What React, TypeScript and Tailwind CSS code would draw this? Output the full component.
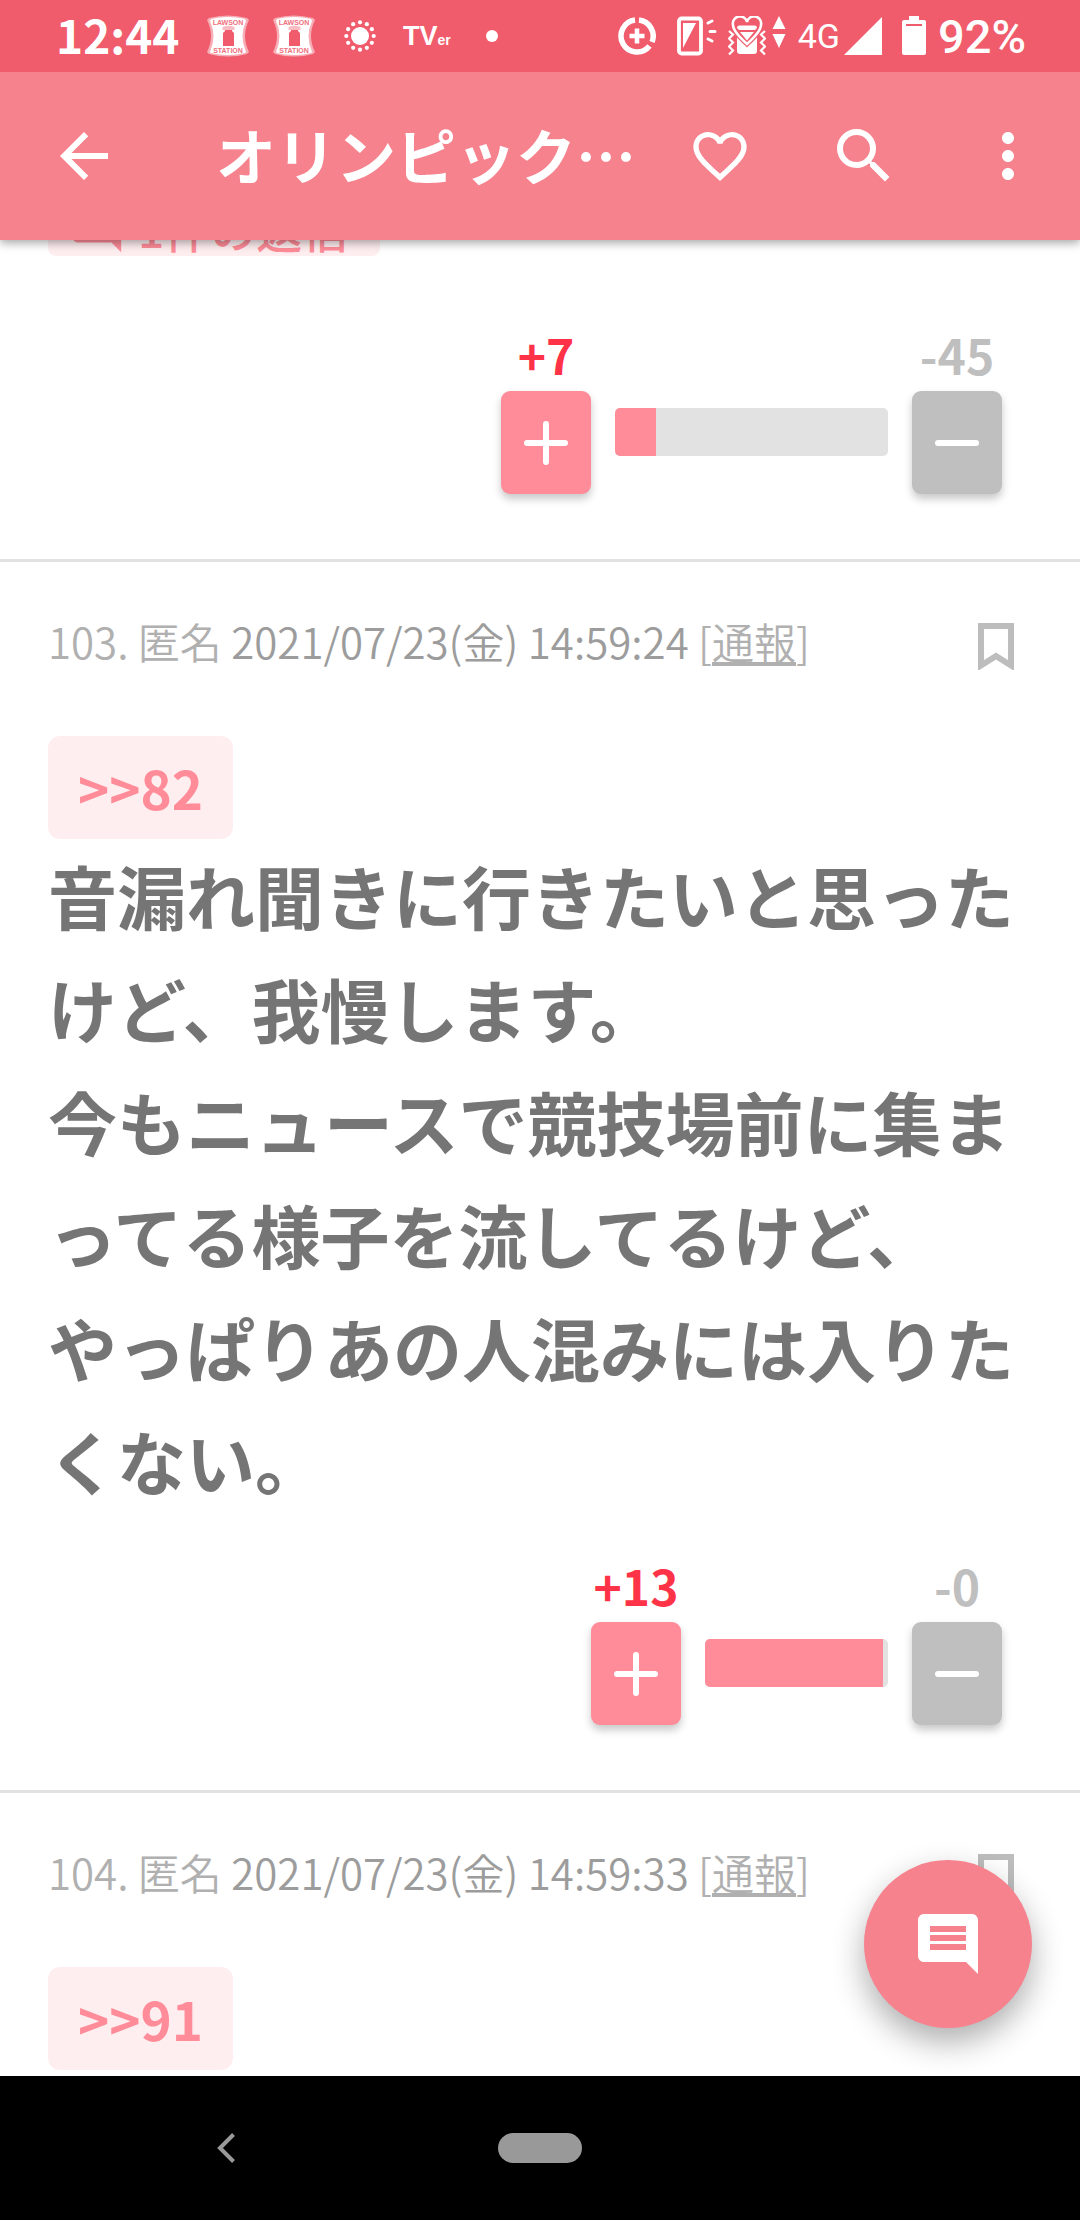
import React from "react";
import { MdArrowBack, MdComment, MdFavoriteBorder, MdMoreVert, MdSearch } from "react-icons/md";

function LawsonIcon() {
  return (
    <svg viewBox="0 0 42 42" className="h-[42px] w-[42px]" aria-hidden="true">
      <path d="M2 3Q21 -2 40 3L42 5Q34 21 42 37L40 39Q21 44 2 39L0 37Q8 21 0 5Z" fill="#fff" opacity="0.5" />
      <path d="M4 4Q21 0 38 4L39 6Q32 21 39 37L38 38Q21 42 4 38L3 37Q10 21 3 6Z" fill="#fff" />
      <path d="M18 13h7v3l2 2v13H16V18l2-2z" fill="#f05c6c" />
      <path d="M15.500 12Q21.500 9.500 27.500 12v3h-12z" fill="#f9bcc3" />
      <text x="21" y="10" textAnchor="middle" fontSize="7" fontWeight="700" fill="#f0707e" fontFamily="Liberation Sans, sans-serif">LAWSON</text>
      <text x="21" y="38" textAnchor="middle" fontSize="7" fontWeight="700" fill="#f0707e" fontFamily="Liberation Sans, sans-serif">STATION</text>
    </svg>
  );
}

function SunIcon() {
  const dots = Array.from({ length: 12 }, (_, i) => (i * Math.PI) / 6);
  return (
    <svg viewBox="0 0 36 36" className="h-9 w-9" aria-hidden="true" fill="#fff">
      <circle cx="18" cy="18" r="9" />
      {dots.map((a) => (
        <circle key={a} cx={18 + 13.7 * Math.cos(a)} cy={18 + 13.7 * Math.sin(a)} r="2.1" />
      ))}
    </svg>
  );
}

function TverIcon() {
  return (
    <svg viewBox="0 0 50 40" className="h-10 w-[50px]" aria-hidden="true" fill="#fff" fontFamily="Liberation Sans, sans-serif">
      <text x="2" y="29" fontSize="27" fontWeight="700">TV<tspan fontSize="14">er</tspan></text>
    </svg>
  );
}

function DataSaverIcon() {
  return (
    <svg viewBox="0 0 38 38" className="h-[38px] w-[38px]" aria-hidden="true" fill="none" stroke="#fff">
      <path d="M21 3.1A16 16 0 0 1 34 25M31.500 29A16 16 0 1 1 17 3.1" strokeWidth="5.500" />
      <path d="M19 11.500v15M11.500 19h15" strokeWidth="4.500" />
    </svg>
  );
}

function PhoneLightIcon() {
  return (
    <svg viewBox="0 0 40 40" className="h-10 w-10" aria-hidden="true">
      <rect x="2" y="2.500" width="22" height="35" rx="2.500" fill="none" stroke="#fff" strokeWidth="3.800" />
      <path d="M6 7h13L6 32z" fill="#fff" />
      <path d="M31 7l4-2M33 15.500h5M31 23l4 2" stroke="#fff" strokeWidth="3" strokeLinecap="round" />
    </svg>
  );
}

function VibrateHeartIcon() {
  return (
    <svg viewBox="0 0 38 40" className="h-10 w-[38px]" aria-hidden="true">
      <path d="M9 20h20v15q0 3-3 3H12q-3 0-3-3z" fill="#fff" />
      <path d="M19 28C8 18 5 13 5 9a6.500 6.500 0 0 1 14-3 6.500 6.500 0 0 1 14 3c0 4-3 9-14 19z" fill="#f05c6c" stroke="#f05c6c" strokeWidth="5" />
      <path d="M19 28C8 18 5 13 5 9a6.500 6.500 0 0 1 14-3 6.500 6.500 0 0 1 14 3c0 4-3 9-14 19z" fill="#f05c6c" stroke="#fff" strokeWidth="2.600" />
      <path d="M9 12q0-2.500 2.500-2.500h15q2.500 0 2.500 2.500l-2 2H11z" fill="#fff" />
      <path d="M12 16h14l-7 8.500z" fill="#fff" />
      <path d="M1 15l4 3.500-4 4 4 4-4 4 4 4-4 4M37 15l-4 3.500 4 4-4 4 4 4-4 4 4 4" fill="none" stroke="#fff" strokeWidth="2.200" />
    </svg>
  );
}

function StatusBar() {
  return (
    <div className="relative z-20 flex h-[72px] shrink-0 items-center justify-between bg-[#f05c6c] pr-[54px] pl-14 text-white">
      <div className="flex items-center">
        <span className="w-[139px] pb-1 text-[46px] leading-none font-bold">12:44</span>
        <span className="flex w-[66px] justify-center"><LawsonIcon /></span>
        <span className="flex w-[66px] justify-center"><LawsonIcon /></span>
        <span className="flex w-[66px] justify-center"><SunIcon /></span>
        <span className="flex w-[66px] justify-center"><TverIcon /></span>
        <span className="flex w-[66px] justify-center"><span className="h-3 w-3 rounded-full bg-white" /></span>
      </div>
      <div className="flex items-center font-[Roboto,sans-serif]">
        <DataSaverIcon />
        <span className="ml-[21px]"><PhoneLightIcon /></span>
        <span className="ml-[11px]"><VibrateHeartIcon /></span>
        <svg viewBox="0 0 14 32" className="mb-2 ml-1.5 h-8 w-3.5" aria-hidden="true" fill="#fff">
          <path d="M7 0l6.500 13H.5zM7 32L.5 18h13z" />
        </svg>
        <span className="ml-3 text-[34px] leading-none">4G</span>
        <svg viewBox="0 0 38 38" className="ml-1 h-[38px] w-[38px]" aria-hidden="true" fill="#fff"><path d="M38 0v38H0z" /></svg>
        <svg viewBox="0 0 24 40" className="ml-5 h-10 w-6" aria-hidden="true">
          <path d="M7 0h10v4h5q2 0 2 2v31q0 2-2 2H2q-2 0-2-2V6q0-2 2-2h5z" fill="#fff" />
          <path d="M4 9h16" stroke="#f05c6c" strokeWidth="2" />
        </svg>
        <span className="ml-3 text-[47px] leading-none font-medium">92%</span>
      </div>
    </div>
  );
}

function AppBar() {
  return (
    <header className="relative z-10 flex h-[168px] shrink-0 items-center bg-[#f6828e] pr-9 pl-12 text-white shadow-[0_3px_9px_rgba(0,0,0,0.35)]">
      <button type="button" aria-label="戻る"><MdArrowBack className="h-[72px] w-[72px]" /></button>
      <h1 className="ml-24 min-w-0 flex-1 truncate pb-1 text-[60px] leading-[88px] font-bold">オリンピック…</h1>
      <button type="button" aria-label="お気に入り" className="mr-[76px]"><MdFavoriteBorder className="h-16 w-16" /></button>
      <button type="button" aria-label="検索" className="mr-[72px]"><MdSearch className="h-[72px] w-[72px]" /></button>
      <button type="button" aria-label="メニュー"><MdMoreVert className="h-[72px] w-[72px]" /></button>
    </header>
  );
}

type VotesProps = { plus: number; minus: number; fill: number; wide?: boolean };

function Votes({ plus, minus, fill, wide }: VotesProps) {
  return (
    <div className="flex items-end justify-end gap-6 pr-[30px]">
      <div className="flex w-[90px] flex-col items-center gap-[7px]">
        <span className="text-[48px] leading-[60px] font-bold whitespace-nowrap text-[#ff3347]">+{plus}</span>
        <button type="button" aria-label="プラス" className="flex h-[103px] w-full items-center justify-center rounded-[9px] bg-[#ff8c98] shadow-[0_5px_8px_rgba(0,0,0,0.22)]">
          <svg viewBox="0 0 44 44" className="h-11 w-11" stroke="#fff" strokeWidth="6" strokeLinecap="round"><path d="M3 22h38M22 3v38" /></svg>
        </button>
      </div>
      <div className={`mb-[38px] h-12 overflow-hidden rounded-[5px] bg-[#e2e2e2] ${wide ? "w-[273px]" : "w-[183px]"}`}>
        <div className="h-full bg-[#ff8c98]" style={{ width: `${fill}%` }} />
      </div>
      <div className="flex w-[90px] flex-col items-center gap-[7px]">
        <span className="text-[48px] leading-[60px] font-bold whitespace-nowrap text-[#bfbfbf]">-{minus}</span>
        <button type="button" aria-label="マイナス" className="flex h-[103px] w-full items-center justify-center rounded-[9px] bg-[#bfbfbf] shadow-[0_5px_8px_rgba(0,0,0,0.22)]">
          <svg viewBox="0 0 44 44" className="h-11 w-11" stroke="#fff" strokeWidth="6" strokeLinecap="round"><path d="M3 22h38" /></svg>
        </button>
      </div>
    </div>
  );
}

type PostProps = { no: number; time: string; reply: number; children?: React.ReactNode };

function Post({ no, time, reply, children }: PostProps) {
  return (
    <article className="border-t-[3px] border-[#e2e2e2] px-12 pt-12 pb-[65px]">
      <div className="flex h-[60px] items-center justify-between">
        <p className="pt-0.5 text-[42px] leading-[60px] font-[350] whitespace-nowrap text-[#b0b0b0]">
          {no}. 匿名 <time className="text-[#9c9c9c]">2021/07/23(金) {time}</time> [<a href="#report" className="underline">通報</a>]
        </p>
        <button type="button" aria-label="ブックマーク" className="mr-[18px] self-end">
          <svg viewBox="0 0 36 47" className="h-[47px] w-9" fill="none" stroke="#bdbdbd" strokeWidth="6"><path d="M3 3h30v39.500L18 33 3 42.500z" /></svg>
        </button>
      </div>
      <a href={`#comment-${reply}`} className="mt-[66px] flex h-[103px] w-fit items-center rounded-xl bg-[#ffeef0] px-[30px] text-[53px] leading-none font-bold text-[#ff8c98]">
        &gt;&gt;{reply}
      </a>
      {children}
    </article>
  );
}

export default function App() {
  return (
    <div lang="ja" className="flex h-screen flex-col bg-white font-['Noto_Sans_CJK_JP',sans-serif]">
      <StatusBar />
      <AppBar />
      <main className="relative min-h-0 flex-1 overflow-hidden">
        <article className="-mt-10 px-12 pb-[65px]">
          <a href="#replies" className="mb-[68px] flex h-14 w-fit items-center gap-3 rounded-lg bg-[#ffeef0] pr-8 pl-5 text-[46px] leading-none font-medium text-[#ff8c98]">
            <MdComment className="h-[58px] w-[58px]" />
            1件の返信
          </a>
          <Votes plus={7} minus={45} fill={15} wide />
        </article>
        <Post no={103} time="14:59:24" reply={82}>
          <p className="mb-[38px] text-[69px] leading-[113px] font-bold text-[#757575]">
            音漏れ聞きに行きたいと思ったけど、我慢します。
            <br />
            今もニュースで競技場前に集まってる様子を流してるけど、
            <br />
            やっぱりあの人混みには入りたくない。
          </p>
          <Votes plus={13} minus={0} fill={97} />
        </Post>
        <Post no={104} time="14:59:33" reply={91} />
        <button type="button" aria-label="コメントする" className="absolute right-12 bottom-12 flex h-[168px] w-[168px] items-center justify-center rounded-full bg-[#f6828e] text-white shadow-[0_14px_32px_rgba(0,0,0,0.32)]">
          <MdComment className="h-[72px] w-[72px]" />
        </button>
      </main>
      <nav className="grid h-36 shrink-0 grid-cols-[1fr_84px_1fr] items-center bg-black">
        <button type="button" aria-label="戻る" className="ml-[217px] w-fit">
          <svg viewBox="0 0 18 30" className="h-[30px] w-[18px]" fill="none" stroke="#999" strokeWidth="4"><path d="M16.500 1.500L3 15l13.500 13.500" /></svg>
        </button>
        <button type="button" aria-label="ホーム" className="h-[30px] rounded-full bg-[#999]" />
      </nav>
    </div>
  );
}
